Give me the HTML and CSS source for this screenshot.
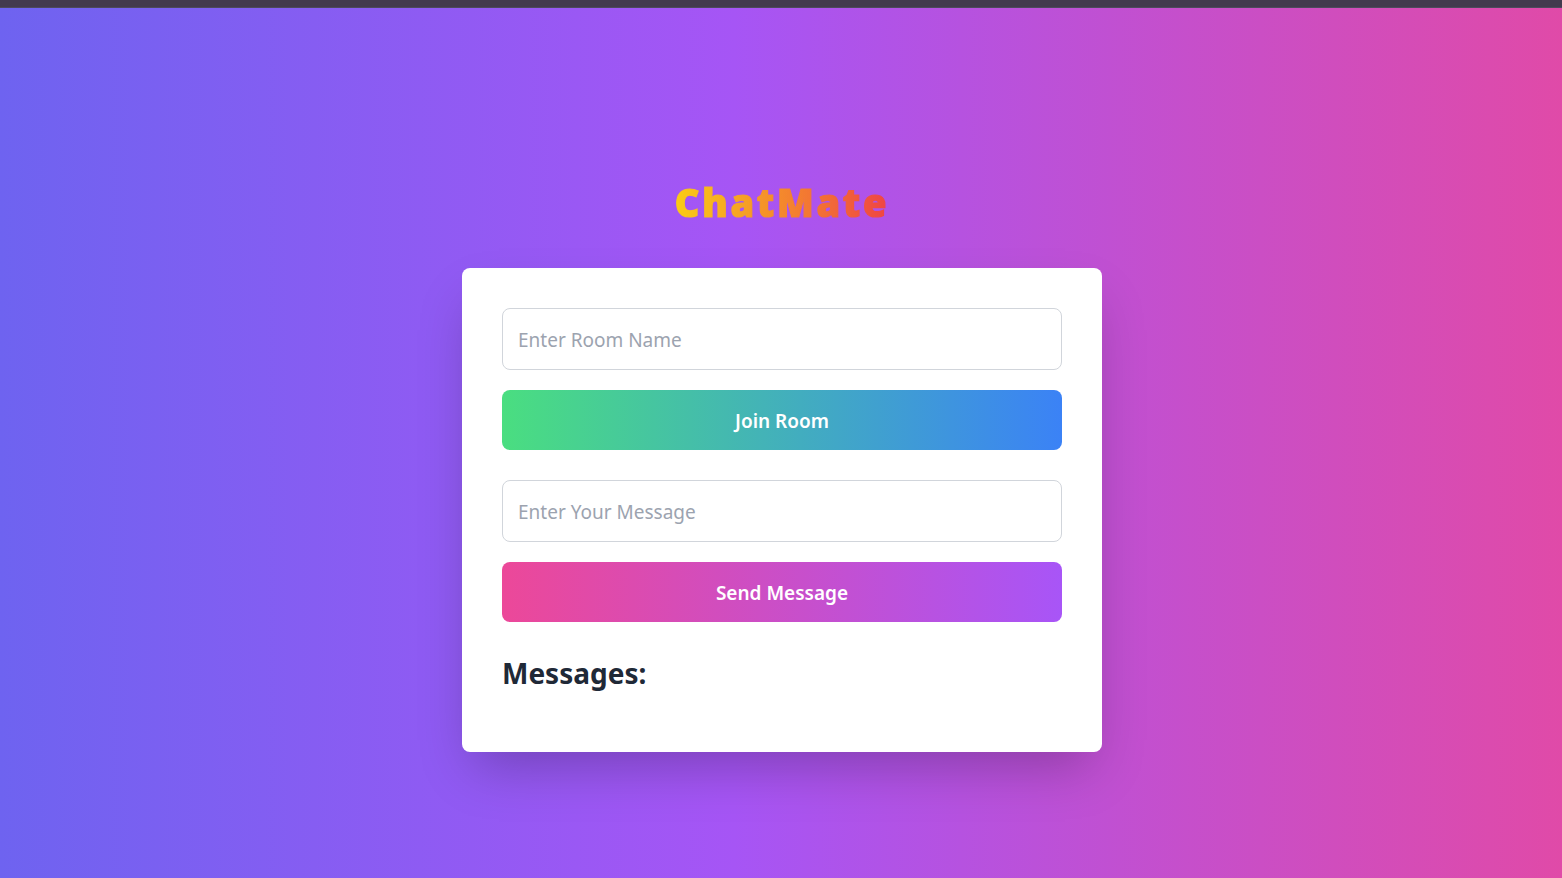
FILE: index.html
```html
<!DOCTYPE html>
<html lang="en">
<head>
<meta charset="utf-8">
<title>ChatMate</title>
<link rel="stylesheet" href="styles.css">
</head>
<body>
<div class="topbar"></div>
<main class="page">
  <h1 class="title">ChatMate</h1>
  <section class="card">
    <input class="field" type="text" placeholder="Enter Room Name">
    <button class="btn btn-join">Join Room</button>
    <input class="field" type="text" placeholder="Enter Your Message">
    <button class="btn btn-send">Send Message</button>
    <h2 class="messages-title">Messages:</h2>
    <ul class="messages"></ul>
  </section>
</main>
</body>
</html>
```

FILE: styles.css
```css
* { box-sizing: border-box; }
html, body { margin: 0; padding: 0; height: 100%; }
body {
  font-family: "Noto Sans", "Open Sans", sans-serif;
  background: linear-gradient(to right, #6e63f0, #a655f5 47%, #e04aa8);
  min-height: 878px;
  overflow: hidden;
}
.topbar {
  height: 8px;
  background: #433a4e;
  border-bottom: 1px solid #4d4a5c;
}
.page {
  display: flex;
  flex-direction: column;
  align-items: center;
  padding-top: 174px;
  padding-left: 2px;
}
.title {
  margin: 0 0 46px;
  font-size: 38px;
  line-height: 40px;
  font-weight: 900;
  letter-spacing: 2.7px;
  -webkit-text-stroke: 1.2px transparent;
  background: linear-gradient(to right, #facc15, #ef4444);
  -webkit-background-clip: text;
  background-clip: text;
  color: transparent;
}
.card {
  width: 640px;
  background: #fff;
  border-radius: 8px;
  padding: 40px;
  box-shadow: 0 25px 50px -12px rgba(0,0,0,0.25);
  display: flex;
  flex-direction: column;
}
.field {
  width: 100%;
  height: 62px;
  padding: 17px 15px 15px;
  border: 1px solid #d1d5db;
  border-radius: 8px;
  font-family: inherit;
  font-size: 19px;
  line-height: 28px;
  color: #111827;
  outline: none;
  margin-bottom: 20px;
}
.field::placeholder { color: #9ca3af; }
.btn {
  height: 60px;
  padding: 2px 0 0;
  border: none;
  border-radius: 8px;
  color: #fff;
  font-family: inherit;
  font-size: 19px;
  font-weight: 600;
  cursor: pointer;
}
.btn-join {
  background: linear-gradient(to right, #4ade80, #3b82f6);
  margin-bottom: 30px;
}
.btn-send { background: linear-gradient(to right, #ec4899, #a855f7); }
.messages-title {
  margin: 35px 0 0;
  font-size: 28px;
  line-height: 32px;
  font-weight: 700;
  color: #1f2937;
}
.messages {
  list-style: none;
  margin: 0;
  padding: 0;
  height: 23px;
}
```
